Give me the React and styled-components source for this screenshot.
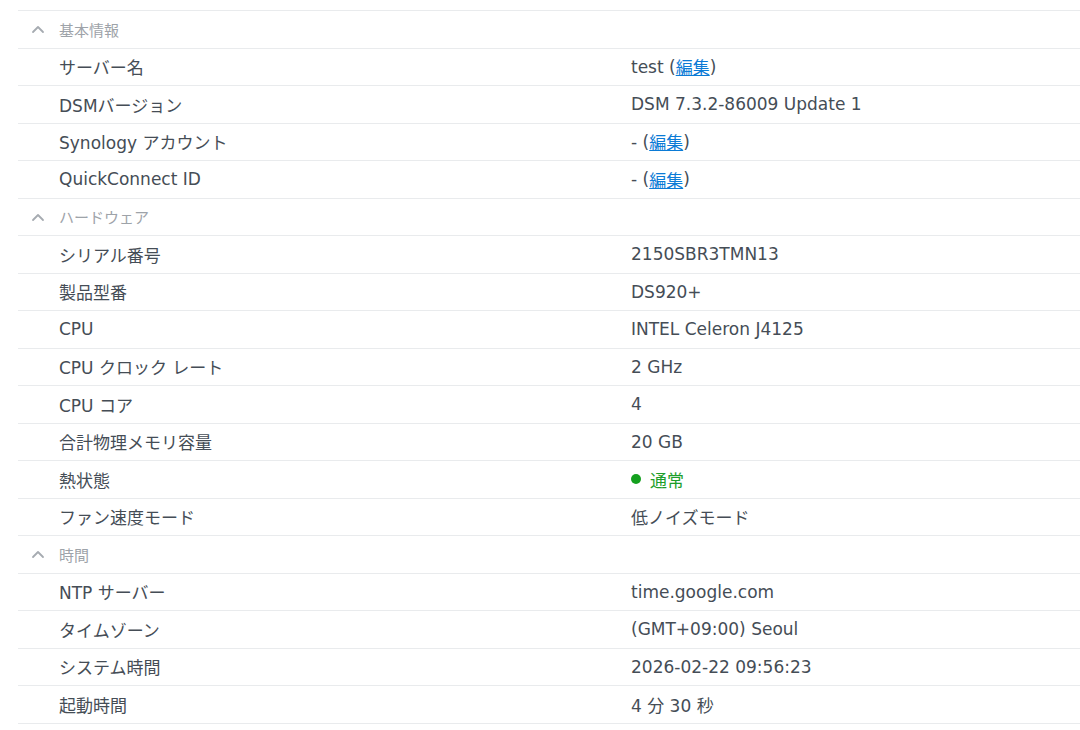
import React from "react";
import styled, { createGlobalStyle } from "styled-components";

const GlobalStyle = createGlobalStyle`
  html, body {
    margin: 0;
    padding: 0;
    background: #ffffff;
  }
  body {
    font-family: "DejaVu Sans", "Noto Sans CJK JP", sans-serif;
  }
`;

const sections = [
  {
    title: "基本情報",
    rows: [
      { label: "サーバー名", value: "test", edit: true },
      { label: "DSMバージョン", value: "DSM 7.3.2-86009 Update 1" },
      { label: "Synology アカウント", value: "-", edit: true },
      { label: "QuickConnect ID", value: "-", edit: true },
    ],
  },
  {
    title: "ハードウェア",
    rows: [
      { label: "シリアル番号", value: "2150SBR3TMN13" },
      { label: "製品型番", value: "DS920+" },
      { label: "CPU", value: "INTEL Celeron J4125" },
      { label: "CPU クロック レート", value: "2 GHz" },
      { label: "CPU コア", value: "4" },
      { label: "合計物理メモリ容量", value: "20 GB" },
      { label: "熱状態", value: "通常", status: true },
      { label: "ファン速度モード", value: "低ノイズモード" },
    ],
  },
  {
    title: "時間",
    rows: [
      { label: "NTP サーバー", value: "time.google.com" },
      { label: "タイムゾーン", value: "(GMT+09:00) Seoul" },
      { label: "システム時間", value: "2026-02-22 09:56:23" },
      { label: "起動時間", value: "4 分 30 秒" },
    ],
  },
];

const App = () => {
  return (
    <>
      <GlobalStyle />
      <Page>
        <InfoTable>
          {sections.map((section) => (
            <React.Fragment key={section.title}>
              <SectionRow>
                <Chevron viewBox="0 0 16 16">
                  <path d="M3 11 L8 6 L13 11" />
                </Chevron>
                <SectionTitle>{section.title}</SectionTitle>
              </SectionRow>
              {section.rows.map((row) => (
                <Row key={row.label}>
                  <Label>{row.label}</Label>
                  <Value $status={row.status}>
                    {row.status && <StatusDot />}
                    {row.value}
                    {row.edit && (
                      <>
                        {" ("}
                        <EditLink href="#">編集</EditLink>
                        {")"}
                      </>
                    )}
                  </Value>
                </Row>
              ))}
            </React.Fragment>
          ))}
        </InfoTable>
      </Page>
    </>
  );
};

export default App;

const Page = styled.div`
  width: 1080px;
  height: 730px;
  overflow: hidden;
  padding: 10px 0 0 18px;
  box-sizing: border-box;
`;

const InfoTable = styled.div`
  display: flex;
  flex-direction: column;
  border-top: 1px solid #e9ebed;
`;

const BaseRow = styled.div`
  display: flex;
  align-items: center;
  height: 36.5px;
  border-bottom: 1px solid #e9ebed;
  box-sizing: content-box;
`;

const SectionRow = styled(BaseRow)`
  padding-left: 12px;
`;

const Chevron = styled.svg`
  width: 16px;
  height: 16px;
  margin-right: 13px;
  fill: none;
  stroke: #a6abb1;
  stroke-width: 1.8;
  stroke-linecap: round;
  stroke-linejoin: round;
`;

const SectionTitle = styled.span`
  font-size: 15px;
  color: #9ea3a9;
`;

const Row = styled(BaseRow)`
  padding-left: 41px;
`;

const Label = styled.div`
  width: 572px;
  flex-shrink: 0;
  font-size: 17px;
  color: #454d56;
`;

const Value = styled.div`
  display: flex;
  align-items: center;
  white-space: pre;
  font-size: 17px;
  color: ${(p) => (p.$status ? "#1d9e2a" : "#454d56")};
`;

const StatusDot = styled.span`
  display: inline-block;
  width: 10px;
  height: 10px;
  border-radius: 50%;
  background: #14a01f;
  margin-right: 9px;
`;

const EditLink = styled.a`
  color: #0b7bd6;
  text-decoration: underline;
`;
